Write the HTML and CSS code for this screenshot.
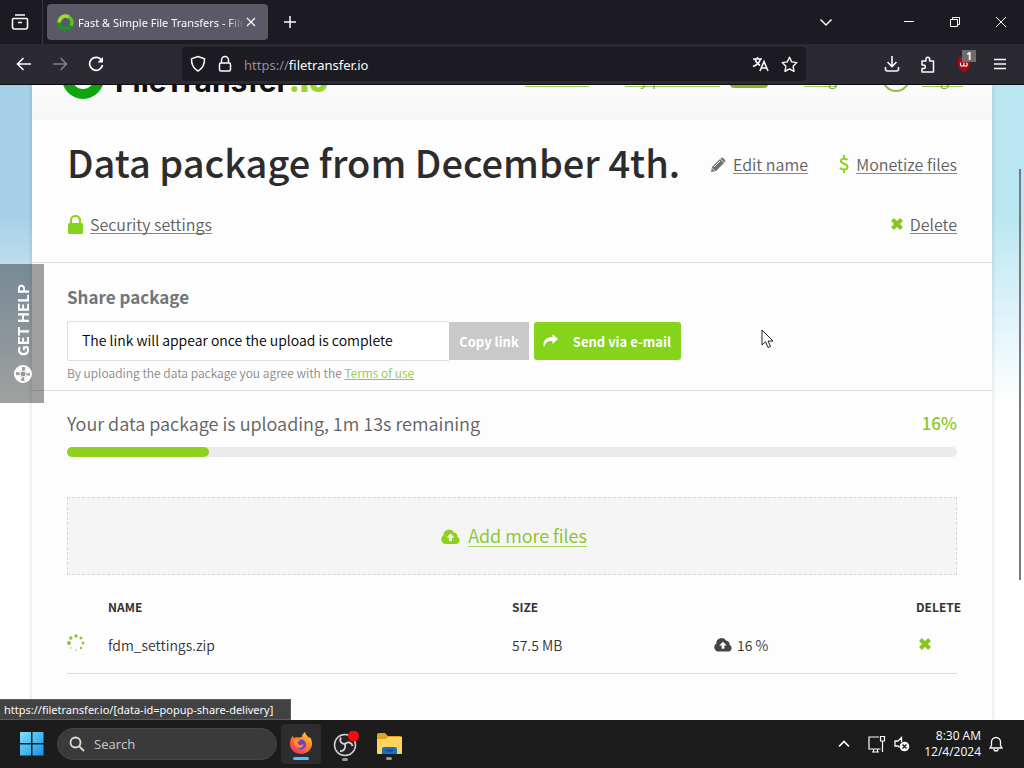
FILE: index.html
```html
<!DOCTYPE html>
<html lang="en">
<head>
<meta charset="utf-8">
<title>Fast &amp; Simple File Transfers - FileTransfer.io</title>
<link rel="stylesheet" href="styles.css">
</head>
<body>
<div class="desktop">
  <div class="tabbar">
    <button class="icon-btn view-btn" aria-label="Recent browsing"><svg width="18" height="18" viewBox="0 0 18 18" fill="none" stroke="currentColor" stroke-width="1.6"><path d="M4 2h10M2.500 5.500h13a1 1 0 0 1 1 1V14a2 2 0 0 1-2 2h-11a2 2 0 0 1-2-2V6.500a1 1 0 0 1 1-1zM7 9.500h4"/></svg></button>
    <div class="tab">
      <svg width="17" height="17" viewBox="0 0 17 17" fill="none" stroke-width="3.500"><circle cx="8.500" cy="8.500" r="6.300" stroke="#159a1c"/><path d="M2.200 8.500A6.300 6.300 0 0 1 12 3.200" stroke="#a6d63b"/><path d="M12 3.200a6.300 6.300 0 0 1 2 8.500" stroke="#65bd25"/></svg>
      <span class="tab-title">Fast &amp; Simple File Transfers - FileTransfer.io</span>
      <button class="icon-btn tab-close" aria-label="Close tab"><svg width="10" height="10" viewBox="0 0 10 10" stroke="currentColor" stroke-width="1.200"><path d="M1 1l8 8M9 1L1 9"/></svg></button>
    </div>
    <button class="icon-btn new-tab" aria-label="New tab"><svg width="12" height="12" viewBox="0 0 12 12" stroke="currentColor" stroke-width="1.500"><path d="M6 0v12M0 6h12"/></svg></button>
    <div class="window-controls">
      <button class="icon-btn list-tabs" aria-label="List all tabs"><svg width="14" height="14" viewBox="0 0 14 14" fill="none" stroke="currentColor" stroke-width="1.500"><path d="M1.500 4.500L7 10l5.500-5.500"/></svg></button>
      <button class="icon-btn" aria-label="Minimize"><svg width="12" height="12" viewBox="0 0 12 12" stroke="currentColor"><path d="M1 5.500h10"/></svg></button>
      <button class="icon-btn" aria-label="Restore"><svg width="12" height="12" viewBox="0 0 12 12" fill="none" stroke="currentColor"><path d="M1.500 3.500h7v7h-7zM3.500 3.500v-2h7v7h-2"/></svg></button>
      <button class="icon-btn" aria-label="Close"><svg width="12" height="12" viewBox="0 0 12 12" stroke="currentColor"><path d="M1 1l10 10M11 1L1 11"/></svg></button>
    </div>
  </div>

  <div class="toolbar">
    <div class="nav-buttons">
      <button class="icon-btn" aria-label="Back"><svg width="16" height="16" viewBox="0 0 16 16" fill="none" stroke="currentColor" stroke-width="1.600"><path d="M15 8H1.500M7.500 2L1.500 8l6 6"/></svg></button>
      <button class="icon-btn disabled" aria-label="Forward" disabled><svg width="16" height="16" viewBox="0 0 16 16" fill="none" stroke="currentColor" stroke-width="1.600"><path d="M1 8h13.500M8.500 2l6 6-6 6"/></svg></button>
      <button class="icon-btn" aria-label="Reload"><svg width="16" height="16" viewBox="0 0 16 16" fill="none" stroke="currentColor" stroke-width="1.700"><path d="M13.700 4.500A6.500 6.500 0 1 0 14.500 9"/><path d="M15 1v5.500H9.500z" fill="currentColor" stroke="none"/></svg></button>
    </div>
    <div class="urlbar">
      <svg width="16" height="18" viewBox="0 0 16 18" fill="none" stroke="currentColor" stroke-width="1.500"><path d="M8 1.500l6.500 2.300c.2 5.500-1.500 9.500-6.500 12.400C3 13.300 1.300 9.300 1.500 3.800z"/></svg>
      <svg width="14" height="18" viewBox="0 0 14 18" fill="none" stroke="currentColor" stroke-width="1.500"><rect x="1.500" y="8" width="11" height="8" rx="1.500"/><path d="M3.500 8V5a3.500 3.500 0 0 1 7 0v3"/></svg>
      <div class="address"><span class="scheme">https://</span><input type="text" aria-label="Address" value="filetransfer.io"></div>
      <button class="icon-btn" aria-label="Translate page"><svg width="17" height="16" viewBox="0 0 17 16" fill="none" stroke="currentColor" stroke-width="1.600"><path d="M1 3h9M5.500 1v2M8.500 3C7.500 6.500 5 9 1 10.500M3 3c.8 3 2.500 5 5 6.500M8 15l4-9.500L16 15M9.500 12h5"/></svg></button>
      <button class="icon-btn" aria-label="Bookmark"><svg width="17" height="17" viewBox="0 0 17 17" fill="none" stroke="currentColor" stroke-width="1.400" stroke-linejoin="round"><path d="M8.500 1.200l2.200 4.700 5.100.7-3.700 3.600.9 5.200-4.500-2.500L4 15.400l.9-5.200L1.200 6.600l5.100-.7z"/></svg></button>
    </div>
    <div class="tool-buttons">
      <button class="icon-btn" aria-label="Downloads"><svg width="16" height="16" viewBox="0 0 16 16" fill="none" stroke="currentColor" stroke-width="1.600"><path d="M8 0v10M3.500 6L8 10.500 12.500 6M1.500 11v2a2 2 0 0 0 2 2h9a2 2 0 0 0 2-2v-2"/></svg></button>
      <button class="icon-btn" aria-label="Extensions"><svg width="16" height="17" viewBox="0 0 16 17" fill="none" stroke="currentColor" stroke-width="1.500" stroke-linejoin="round"><path d="M2 5h4V3a1.800 1.800 0 0 1 3.600 0v2H13.500v11H2v-3.500h1.500a1.800 1.800 0 0 0 0-3.600H2z"/></svg></button>
      <button class="icon-btn shield-btn" aria-label="Ad blocker"><svg width="16" height="17" viewBox="0 0 16 17"><path d="M8 0l6 2v6c0 4-2.500 6.500-6 8.500C4.500 14.500 2 12 2 8V2z" fill="#a80813"/><path d="M4.500 6.500v2a1.700 1.700 0 0 0 3.400 0v-2M7.900 8.500a1.700 1.700 0 0 0 3.400 0 2 2 0 0 0-1-1.800" fill="none" stroke="#fff" stroke-width="1.100"/></svg><span class="count">1</span></button>
      <button class="icon-btn" aria-label="Menu"><svg width="14" height="14" viewBox="0 0 14 14" stroke="currentColor" stroke-width="1.500"><path d="M1 2.500h12M1 7h12M1 11.500h12"/></svg></button>
    </div>
  </div>

  <div class="viewport">
    <div class="card">
      <header class="site-header">
        <a class="logo" href="#"><svg width="42" height="42" viewBox="0 0 42 42" fill="none" stroke-width="10"><circle cx="21" cy="21" r="16" stroke="#0fa50f"/><path d="M6 26A16 16 0 0 1 34 12" stroke="#a6d63b"/></svg><span>FileTransfer<b>.io</b></span></a>
        <nav class="site-nav">
          <a class="nav-features" href="#">Features</a>
          <a class="nav-premium" href="#">Try premium</a>
          <span class="pill">PRO</span>
          <a class="nav-blog" href="#">Blog</a>
          <span class="user-ring"></span>
          <a class="nav-login" href="#">Login</a>
        </nav>
      </header>

      <section class="panel title-panel">
        <div class="title-row">
          <h1>Data package from December 4th.</h1>
          <a class="action edit" href="#"><svg width="15" height="15" viewBox="0 0 15 15"><path d="M0 15l1-5L9 2l4 4-8 8z" fill="#707070"/><path d="M10 1.200a1.600 1.600 0 0 1 2.300 0l1.600 1.600a1.600 1.600 0 0 1 0 2.200l-.5.500-4-4z" fill="#707070"/><path d="M1.500 11.500l2 2M3 10l6-6" stroke="#fff"/></svg><span>Edit name</span></a>
          <a class="action money" href="#"><svg width="10" height="18" viewBox="0 0 10 18" fill="none" stroke="#8ed11e" stroke-width="2"><path d="M8.500 5C7.500 3.500 2 2.500 2 6c0 3.500 6.500 2 6.500 6 0 3.500-6 3-7.500.800M5 0v3M5 15v3"/></svg><span>Monetize files</span></a>
        </div>
        <div class="action-row">
          <a class="action" href="#"><svg width="16" height="19" viewBox="-1 0 16 19"><path d="M3 9V5.500a4.500 4.500 0 0 1 9 0V9" fill="none" stroke="#8ed11e" stroke-width="2.200"/><rect y="8" width="15" height="11" rx="1.500" fill="#83d321"/></svg><span>Security settings</span></a>
          <a class="action" href="#"><svg width="12" height="12" viewBox="0 0 12 12" stroke="#84c51e" stroke-width="4"><path d="M1.500 1.500l9 9M10.500 1.500l-9 9"/></svg><span>Delete</span></a>
        </div>
      </section>

      <section class="panel share-panel">
        <h2><label for="link">Share package</label></h2>
        <div class="share-row">
          <input class="link-field" id="link" type="text" value="The link will appear once the upload is complete" readonly>
          <button class="copy">Copy link</button>
          <button class="send"><svg width="15" height="14" viewBox="0 0 15 14"><path d="M9.500 0L15 5l-5.500 5V7C5 6.800 2.500 8 1 13.500-.8 7.500 2.500 3 9.500 3z" fill="#fff"/></svg><span>Send via e-mail</span></button>
        </div>
        <p class="terms">By uploading the data package you agree with the <a href="#">Terms of use</a></p>
      </section>

      <section class="panel upload-panel">
        <div class="progress-text"><span id="upload-label">Your data package is uploading, 1m 13s remaining</span><strong>16%</strong></div>
        <div class="bar" role="progressbar" aria-labelledby="upload-label" aria-valuenow="16"><div class="bar-fill" style="width:16%"></div></div>
        <div class="dropzone">
          <a href="#"><svg width="19" height="15" viewBox="0 0 19 15"><path d="M5 15a4.600 4.600 0 0 1-2.500-8.500A5.600 5.600 0 0 1 13 3.500a3.500 3.500 0 0 1 3.300 4.300A3.800 3.800 0 0 1 15.500 15z" fill="#8ed11e"/><path d="M9.500 4.500l4 4h-2.500V12H8V8.500H5.500z" fill="#f5f5f5"/></svg><span>Add more files</span></a>
        </div>
        <table class="files">
          <thead><tr><th class="c-state"></th><th class="c-name">Name</th><th class="c-size">Size</th><th></th><th class="c-del">Delete</th></tr></thead>
          <tbody><tr>
            <td class="c-state"><svg width="18" height="18" viewBox="0 0 18 18" fill="#8cc63a"><circle cx="9" cy="2" r="1.700"/><circle cx="3.800" cy="4" r="1.800"/><circle cx="2" cy="9" r="2"/><circle cx="14" cy="4" r="1.500"/><circle cx="16" cy="9" r="1.400"/><circle cx="14" cy="14" r="1.200"/><circle cx="9" cy="16" r="1" opacity=".5"/><circle cx="4" cy="14" r="1" opacity=".5"/></svg></td>
            <td>fdm_settings.zip</td>
            <td>57.5 MB</td>
            <td><span class="state"><svg width="18" height="15" viewBox="0 0 19 15"><path d="M5 15a4.600 4.600 0 0 1-2.500-8.500A5.600 5.600 0 0 1 13 3.500a3.500 3.500 0 0 1 3.300 4.300A3.800 3.800 0 0 1 15.500 15z" fill="#444"/><path d="M9.500 4.500l4 4h-2.500V12H8V8.500H5.500z" fill="#fff"/></svg>16 %</span></td>
            <td class="c-del"><button class="remove" aria-label="Delete fdm_settings.zip"><svg width="12" height="12" viewBox="0 0 12 12" stroke="#84c51e" stroke-width="4"><path d="M1.500 1.500l9 9M10.500 1.500l-9 9"/></svg></button></td>
          </tr></tbody>
        </table>
      </section>
    </div>
    <button class="help"><span>GET HELP</span><svg width="18" height="18" viewBox="0 0 18 18" fill="none"><circle cx="9" cy="9" r="8" stroke="#fff" stroke-width="2"/><circle cx="9" cy="9" r="5.500" stroke="#fff" stroke-width="3.500" stroke-dasharray="5.500 3.140" stroke-dashoffset="-1.500"/><circle cx="9" cy="9" r="3" stroke="#fff"/></svg></button>
    <div class="scroll-thumb"></div>
    <div class="status">https://filetransfer.io/[data-id=popup-share-delivery]</div>
    <svg class="cursor" width="13" height="20" viewBox="0 0 13 20"><path d="M1 1v15l3.500-3.300L7 18.500l2.500-1-2.400-5.500H12z" fill="#fff" stroke="#222"/></svg>
  </div>

  <div class="taskbar">
    <button class="icon-btn start" aria-label="Start"><svg width="24" height="24" viewBox="0 0 24 24"><defs><linearGradient id="win" x2="1" y2="1"><stop stop-color="#7fe0fb"/><stop offset="1" stop-color="#1593e8"/></linearGradient></defs><path d="M0 0h11v11H0zM12.500 0h11v11h-11zM0 12.500h11v11H0zM12.500 12.500h11v11h-11z" fill="url(#win)"/></svg></button>
    <div class="search"><svg width="16" height="16" viewBox="0 0 16 16" fill="none" stroke="#ddd" stroke-width="1.800"><circle cx="6.500" cy="6.500" r="5"/><path d="M10.300 10.300L15 15"/></svg><input type="text" placeholder="Search" aria-label="Search"></div>
    <button class="icon-btn app active" aria-label="Firefox"><svg width="24" height="24" viewBox="0 0 24 24"><defs><linearGradient id="fox" x1="1" x2=".2" y2="1"><stop stop-color="#ffe14a"/><stop offset=".45" stop-color="#ff8a23"/><stop offset="1" stop-color="#ee2a63"/></linearGradient></defs><path d="M13 5c0-2 1.500-4 3-5 .5 3 3 4 4 6l1-1c2 3 2.500 7 1.500 10A11.500 11.500 0 0 1 1 14C.5 10 1.500 6.500 4 3.500c0 1 .5 2 1 2.500C6 5 8 5 9 5.500z" fill="url(#fox)"/><circle cx="12" cy="12.500" r="5" fill="#7440c9"/><path d="M4 8c3-1.500 5-1 7 1-2 0-3 1-2 2.500 1 2 4 2 5.500.500-.5 4.500-6 5-8.500 2z" fill="#ff9425"/></svg></button>
    <button class="icon-btn app" aria-label="OBS Studio"><svg width="28" height="26" viewBox="-2 0 28 26"><circle cx="12" cy="14" r="10.500" fill="#242426" stroke="#d5d5d5" stroke-width="1.500"/><g fill="none" stroke="#d5d5d5" stroke-width="1.800"><path d="M12 13c-4 0-6-3-4-6.500"/><path d="M12 13c3-3 7-1.500 7.500 2"/><path d="M12 13c1 4-1 7.500-5 7"/></g><circle cx="20.500" cy="5" r="5.500" fill="#f30b0b"/></svg></button>
    <button class="icon-btn app" aria-label="File Explorer"><svg width="25" height="24" viewBox="0 0 25 24"><path d="M0 3a2 2 0 0 1 2-2h6l3 3h12a2 2 0 0 1 2 2v16H0z" fill="#e2a321"/><path d="M0 7h9l2-2h14v15a2 2 0 0 1-2 2H2a2 2 0 0 1-2-2z" fill="#ffd35c"/><path d="M5 17a2 2 0 0 1 2-2h11a2 2 0 0 1 2 2v5H5z" fill="#1670c4"/><path d="M9 18.500h7" stroke="#0d4f91" stroke-width="2"/></svg></button>
    <div class="tray">
      <button class="icon-btn" aria-label="Hidden icons"><svg width="12" height="12" viewBox="0 0 12 12" fill="none" stroke="currentColor" stroke-width="1.700"><path d="M1 8.500l5-5 5 5"/></svg></button>
      <button class="icon-btn net" aria-label="Network"><svg width="18" height="18" viewBox="0 0 18 18" fill="none" stroke="currentColor" stroke-width="1.200"><path d="M11 2H1v12h11.500M4 17h7M5.500 14v3M9.500 14v3M12.500 1.500h4v4.500h-4zM14.500 6v11"/></svg></button>
      <button class="icon-btn sound" aria-label="Sound muted"><svg width="16" height="16" viewBox="0 0 16 16" fill="none" stroke="currentColor" stroke-width="1.300"><path d="M7.500 6V1.500L4 5H1v5h3l1.500 1.500"/><circle cx="10.500" cy="10.500" r="4.800" fill="currentColor" stroke="none"/><path d="M8.500 8.500l4 4M12.500 8.500l-4 4" stroke="#1c1c1c"/></svg></button>
      <div class="clock"><div>8:30 AM</div><div>12/4/2024</div></div>
      <button class="icon-btn" aria-label="Notifications"><svg width="14" height="16" viewBox="0 0 14 16" fill="none" stroke="currentColor" stroke-width="1.300"><path d="M1 12l1.500-2.500V6a4.500 4.500 0 0 1 9 0v3.500L13 12zM5 13a2 2 0 0 0 4 0"/></svg></button>
    </div>
  </div>
</div>
</body>
</html>
```

FILE: styles.css
```css
* { box-sizing: border-box; }

body {
  margin: 0;
  font-family: "Noto Sans CJK SC", "Noto Sans", sans-serif;
  font-weight: 350;
  color: #333;
}

button, input { font: inherit; }
button { cursor: pointer; }
svg { display: block; flex: none; }

.desktop {
  display: flex;
  flex-direction: column;
  height: 100vh;
  overflow: hidden;
}

.icon-btn {
  display: flex;
  align-items: center;
  justify-content: center;
  padding: 0;
  border: 0;
  background: none;
  color: #fbfbfe;
}

/* Browser tab strip */
.tabbar {
  flex: none;
  display: flex;
  align-items: center;
  height: 44px;
  background: #1c1b22;
  font-family: "Noto Sans", sans-serif;
  font-weight: 400;
}

.view-btn {
  width: 43px;
  height: 44px;
  padding-right: 3px;
  border-right: 1px solid #3a3944;
}

.tab {
  display: flex;
  align-items: center;
  width: 221px;
  height: 36px;
  margin-left: 4px;
  padding: 0 12px 0 10px;
  border-radius: 4px;
  background: #5b5966;
  color: #fbfbfe;
  font-size: 11px;
}

.tab-title {
  flex: 1;
  min-width: 0;
  margin-left: 4px;
  overflow: hidden;
  white-space: nowrap;
  mask-image: linear-gradient(to right, #000 90%, transparent);
}

.tab-close { width: 10px; margin-left: 2px; }
.new-tab { width: 43px; height: 44px; }

.window-controls { display: flex; margin-left: auto; }
.window-controls .icon-btn { width: 46px; height: 44px; }
.window-controls .list-tabs { margin-right: 37px; }

/* Address row */
.toolbar {
  flex: none;
  display: flex;
  align-items: center;
  height: 41px;
  border-bottom: 1px solid #0c0c0e;
  background: #2b2a33;
  font-family: "Noto Sans", sans-serif;
  font-weight: 400;
}

.nav-buttons { display: flex; width: 182px; padding-left: 6px; }
.nav-buttons .icon-btn { width: 36px; height: 36px; }
.disabled { opacity: .4; }

.urlbar {
  flex: 1;
  display: flex;
  align-items: center;
  gap: 12px;
  height: 34px;
  padding: 0 8px;
  border-radius: 4px;
  background: #1c1b22;
  color: #fbfbfe;
}

.address { flex: 1; display: flex; align-items: center; padding-top: 1px; font-size: 13px; }
.scheme { color: #8f8f9d; }
.address input {
  flex: 1;
  min-width: 0;
  padding: 0;
  border: 0;
  outline: 0;
  background: none;
  color: inherit;
}

.tool-buttons { display: flex; padding: 0 6px 0 68px; }
.tool-buttons .icon-btn { width: 36px; height: 36px; }
.shield-btn { position: relative; }
.count {
  position: absolute;
  top: 4px;
  right: 6px;
  width: 14px;
  background: #6d6d70;
  font-size: 10px;
  font-weight: 700;
  line-height: 12px;
}

/* Web page */
.viewport {
  position: relative;
  flex: 1;
  min-height: 0;
  overflow: hidden;
  background: linear-gradient(#fff0 20%, #fff 50%), linear-gradient(to right, #a5d0e7 50%, #b9e6f2 50%);
}

.card {
  display: flow-root;
  min-height: 100%;
  margin: 0 32px;
  background: #fdfdfd;
  box-shadow: 0 0 5px #00000026;
}

.site-header {
  display: flex;
  align-items: center;
  justify-content: space-between;
  height: 100px;
  margin-top: -65px;
  padding: 0 29px 0 30px;
  background: linear-gradient(#fcfcfc 60%, #f6f6f6);
}

.logo {
  display: flex;
  align-items: center;
  gap: 11px;
  margin-top: 16px;
  color: #111;
  font-family: Inter, sans-serif;
  font-size: 30px;
  font-weight: 700;
  line-height: 40px;
  text-decoration: none;
}
.logo span { padding-top: 6px; }
.logo b { color: #9bd62c; }

.site-nav {
  display: flex;
  align-items: center;
  margin-top: 16px;
  font-size: 16px;
  line-height: 16px;
}
.site-nav a {
  border-bottom: 1px solid #9bc95e;
  color: #7fb439;
  text-decoration: none;
}
.nav-premium { margin-left: 36px; }
.pill {
  margin-left: 10px;
  padding: 0 6px;
  border-radius: 4px;
  background: #7abc25;
  color: #fff;
  font-size: 13px;
  line-height: 20px;
}
.nav-blog { margin-left: 36px; }
.user-ring {
  width: 28px;
  height: 28px;
  margin: 0 12px 0 45px;
  border: 2px solid #8dbd4d;
  border-radius: 50%;
}

.panel { padding: 0 35px; border-bottom: 1px solid #dcdcdc; }
.title-panel { padding-top: 20px; padding-bottom: 25px; }

.title-row, .action-row { display: flex; align-items: center; }
.title-row { height: 48px; }
.action-row { height: 24px; margin-top: 24px; margin-bottom: 1px; justify-content: space-between; }

h1 {
  margin: 0;
  padding-bottom: 4px;
  color: #2c2c2c;
  font-size: 38px;
  font-weight: 500;
  line-height: 44px;
  white-space: nowrap;
}

.action {
  display: flex;
  align-items: center;
  gap: 7px;
  color: #606060;
  font-size: 16px;
  line-height: 20px;
  text-decoration: none;
  white-space: nowrap;
}
.action span { border-bottom: 1px solid #888; line-height: 18px; }
.edit { margin-left: 31px; }
.money { margin-left: auto; }

.share-panel { padding-top: 22px; padding-bottom: 6px; }

h2 {
  margin: 0 0 12px;
  color: #70757a;
  font-size: 17px;
  font-weight: 700;
  line-height: 24px;
}

.share-row { display: flex; align-items: center; height: 40px; font-size: 14px; }

.link-field {
  width: 382px;
  height: 40px;
  padding: 0 14px 2px;
  border: 1px solid #ddd;
  border-right: 0;
  border-radius: 3px 0 0 3px;
  outline: 0;
  background: #fff;
  color: #000;
}

.copy, .send {
  height: 38px;
  padding: 0;
  border: 0;
  color: #fff;
  font-size: 13px;
  font-weight: 700;
  white-space: nowrap;
}
.copy { width: 80px; background: #c9c9c9; }
.send {
  display: flex;
  align-items: center;
  justify-content: space-between;
  width: 147px;
  margin-left: 5px;
  padding: 0 10px 0 9px;
  border-radius: 3px;
  background: #86d31c;
}

.terms {
  margin: 2px 0 1px;
  color: #888;
  font-size: 12px;
  line-height: 20px;
}
.terms a { color: #8ccb3a; }

.upload-panel { padding-top: 22px; border-bottom: 0; }

.progress-text {
  display: flex;
  justify-content: space-between;
  color: #606060;
  font-size: 18px;
  line-height: 20px;
}
.progress-text strong { color: #8ccb26; font-size: 17px; font-weight: 500; }

.bar {
  height: 10px;
  margin: 14px 0 40px;
  border-radius: 5px;
  background: #ebebeb;
}
.bar-fill { height: 100%; border-radius: 5px; background: #8ed11e; }

.dropzone {
  display: flex;
  align-items: center;
  justify-content: center;
  height: 78px;
  border: 1px dashed #d9d9d9;
  background: #f5f5f5;
}
.dropzone a {
  display: flex;
  align-items: center;
  gap: 8px;
  padding-left: 4px;
  color: #86c425;
  font-size: 18px;
  text-decoration: none;
}
.dropzone span { border-bottom: 1px solid #a9d463; line-height: 21px; }

.files {
  width: 100%;
  margin-top: 16px;
  table-layout: fixed;
  border-collapse: collapse;
  border-bottom: 1px solid #dcdcdc;
  font-size: 14px;
  text-align: left;
}
.files th {
  height: 32px;
  padding: 0;
  font-size: 12px;
  font-weight: 700;
  line-height: 20px;
  text-transform: uppercase;
  white-space: nowrap;
}
.files td { height: 50px; padding: 0 0 6px; line-height: 20px; }
.files .c-state { width: 41px; }
.files td.c-state { padding-bottom: 10px; }
.c-name { width: 404px; }
.c-size { width: 202px; }
.files .c-del { width: 41px; }
.files td.c-del { padding: 0 0 8px 3px; }
.state { display: flex; align-items: center; gap: 5px; }
.remove { padding: 0; border: 0; background: none; }

/* Layers above the page */
.help {
  position: absolute;
  top: 179px;
  left: 0;
  display: flex;
  flex-direction: column;
  align-items: center;
  gap: 9px;
  width: 44px;
  padding: 20px 0 20px 2px;
  border: 0;
  background: #0000005f;
  color: #fff;
  font-size: 15px;
  font-weight: 700;
  line-height: 20px;
}
.help span {
  white-space: nowrap;
  writing-mode: vertical-rl;
  transform: rotate(180deg);
}

.scroll-thumb {
  position: absolute;
  top: 84px;
  right: 3px;
  width: 2px;
  height: 411px;
  background: #77797c;
}

.status {
  position: absolute;
  bottom: 0;
  left: 0;
  padding: 0 17px 0 4px;
  border: 1px solid #5d5d5d;
  border-left: 0;
  background: #424242;
  color: #fbfbfe;
  font-family: "Noto Sans", sans-serif;
  font-size: 11px;
  font-weight: 400;
  line-height: 19px;
}

.cursor { position: absolute; top: 244px; left: 761px; }

/* Desktop taskbar */
.taskbar {
  flex: none;
  display: flex;
  align-items: center;
  height: 48px;
  background: #1c1c1c;
  color: #fff;
  font-family: "Open Sans", sans-serif;
  font-weight: 400;
}

.start { width: 44px; margin-left: 10px; }

.search {
  display: flex;
  align-items: center;
  gap: 9px;
  width: 220px;
  height: 32px;
  margin-left: 3px;
  padding: 0 11px;
  border: 1px solid #454545;
  border-radius: 16px;
  background: #3a3a3a;
  font-size: 13px;
}
.search input {
  flex: 1;
  min-width: 0;
  padding: 0;
  border: 0;
  outline: 0;
  background: none;
}
.search input::placeholder { color: #ccc; opacity: 1; }

.app {
  flex-direction: column;
  gap: 1px;
  width: 40px;
  height: 40px;
  margin-left: 4px;
  padding-top: 4px;
  border-radius: 4px;
}
.app::after {
  content: "";
  width: 6px;
  height: 3px;
  border-radius: 2px;
  background: #9a9a9a;
}
.app.active { background: #2d2d2f; }
.app.active::after { width: 16px; background: #4cc2ff; }

.tray { display: flex; align-items: center; margin-left: auto; padding-right: 21px; }
.net { margin-left: 18px; }
.sound { margin-left: 8px; }
.clock {
  margin: 0 8px 0 14px;
  font-size: 12px;
  line-height: 16px;
  text-align: right;
}
```
